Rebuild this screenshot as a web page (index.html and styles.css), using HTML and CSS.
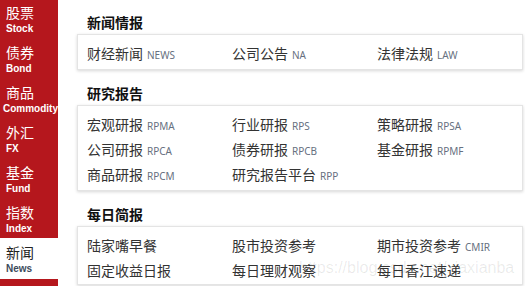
FILE: index.html
```html
<!DOCTYPE html>
<html lang="zh-CN">
<head>
  <meta charset="UTF-8" />
  <title>资讯导航</title>
  <link rel="stylesheet" href="styles.css">
</head>
<body>

  <aside class="sidebar">
    <div class="nav-list">
      <a class="nav-item" href="#"><span class="cn">股票</span><span class="en">Stock</span></a>
      <a class="nav-item" href="#"><span class="cn">债券</span><span class="en">Bond</span></a>
      <a class="nav-item" href="#"><span class="cn">商品</span><span class="en wide">Commodity</span></a>
      <a class="nav-item" href="#"><span class="cn">外汇</span><span class="en">FX</span></a>
      <a class="nav-item" href="#"><span class="cn">基金</span><span class="en">Fund</span></a>
      <a class="nav-item" href="#"><span class="cn">指数</span><span class="en">Index</span></a>
      <a class="nav-item active" href="#"><span class="cn">新闻</span><span class="en">News</span></a>
    </div>
  </aside>

  <main class="content">
    <section class="block">
      <h2 class="block-title">新闻情报</h2>
      <div class="card">
        <a class="link" href="#">财经新闻<span class="code">NEWS</span></a>
        <a class="link" href="#">公司公告<span class="code">NA</span></a>
        <a class="link" href="#">法律法规<span class="code">LAW</span></a>
      </div>
    </section>

    <section class="block">
      <h2 class="block-title">研究报告</h2>
      <div class="card">
        <a class="link" href="#">宏观研报<span class="code">RPMA</span></a>
        <a class="link" href="#">行业研报<span class="code">RPS</span></a>
        <a class="link" href="#">策略研报<span class="code">RPSA</span></a>
        <a class="link" href="#">公司研报<span class="code">RPCA</span></a>
        <a class="link" href="#">债券研报<span class="code">RPCB</span></a>
        <a class="link" href="#">基金研报<span class="code">RPMF</span></a>
        <a class="link" href="#">商品研报<span class="code">RPCM</span></a>
        <a class="link" href="#">研究报告平台<span class="code">RPP</span></a>
      </div>
    </section>

    <section class="block">
      <h2 class="block-title">每日简报</h2>
      <div class="card">
        <a class="link" href="#">陆家嘴早餐</a>
        <a class="link" href="#">股市投资参考</a>
        <a class="link" href="#">期市投资参考<span class="code">CMIR</span></a>
        <a class="link" href="#">固定收益日报</a>
        <a class="link" href="#">每日理财观察</a>
        <a class="link" href="#">每日香江速递</a>
      </div>
    </section>
  </main>

  <div class="watermark">https://blog.csdn.net/xiaxianba</div>

</body>
</html>
```

FILE: styles.css
```css
body {
  margin: 0;
  height: 286px;
  overflow: hidden;
  display: flex;
  background: #fff;
  font-family: "Noto Sans", "Noto Sans CJK SC", sans-serif;
  position: relative;
}

/* Sidebar */
.sidebar {
  width: 58px;
  flex-shrink: 0;
  background: #b5171d;
}

.nav-list {
  margin-top: -2px;
  display: flex;
  flex-direction: column;
}

.nav-item {
  height: 40px;
  box-sizing: border-box;
  padding: 5px 0 0 6px;
  color: #fff;
  text-decoration: none;
  display: flex;
  flex-direction: column;
}

.nav-item .cn {
  font-family: "Noto Sans CJK SC", sans-serif;
  font-size: 14px;
  line-height: 18px;
}

.nav-item .en {
  font-family: "Liberation Sans", Arial, sans-serif;
  font-size: 10px;
  font-weight: bold;
  line-height: 12px;
  margin-top: 2px;
}

.nav-item .en.wide {
  margin-left: -3px;
  white-space: nowrap;
}

.nav-item.active {
  background: #fff;
  height: 41px;
  margin-bottom: -1px;
}

.nav-item.active .cn {
  color: #222;
}

.nav-item.active .en {
  color: #3d4b5c;
}

/* Content */
.content {
  flex: 1;
  padding: 11px 10px 0 19px;
}

.block {
  margin-bottom: 12px;
}

.block-title {
  margin: 0;
  padding-left: 10px;
  font-size: 14px;
  font-weight: bold;
  line-height: 23px;
  color: #111;
}

.card {
  border: 1px solid #e4e4e4;
  box-shadow: 0 1px 3px rgba(0, 0, 0, 0.16);
  padding: 7px 0 2px 9px;
  display: grid;
  grid-template-columns: 145px 145px 145px;
  line-height: 23px;
}

.link {
  font-size: 14px;
  color: #333;
  text-decoration: none;
  white-space: nowrap;
}

.code {
  font-family: "Noto Sans", sans-serif;
  font-size: 10px;
  color: #667080;
  margin-left: 4px;
}

.watermark {
  position: absolute;
  left: 299px;
  top: 259px;
  font-family: "Liberation Sans", Arial, sans-serif;
  font-size: 16px;
  color: rgba(0, 0, 0, 0.09);
  white-space: nowrap;
  pointer-events: none;
}
```
